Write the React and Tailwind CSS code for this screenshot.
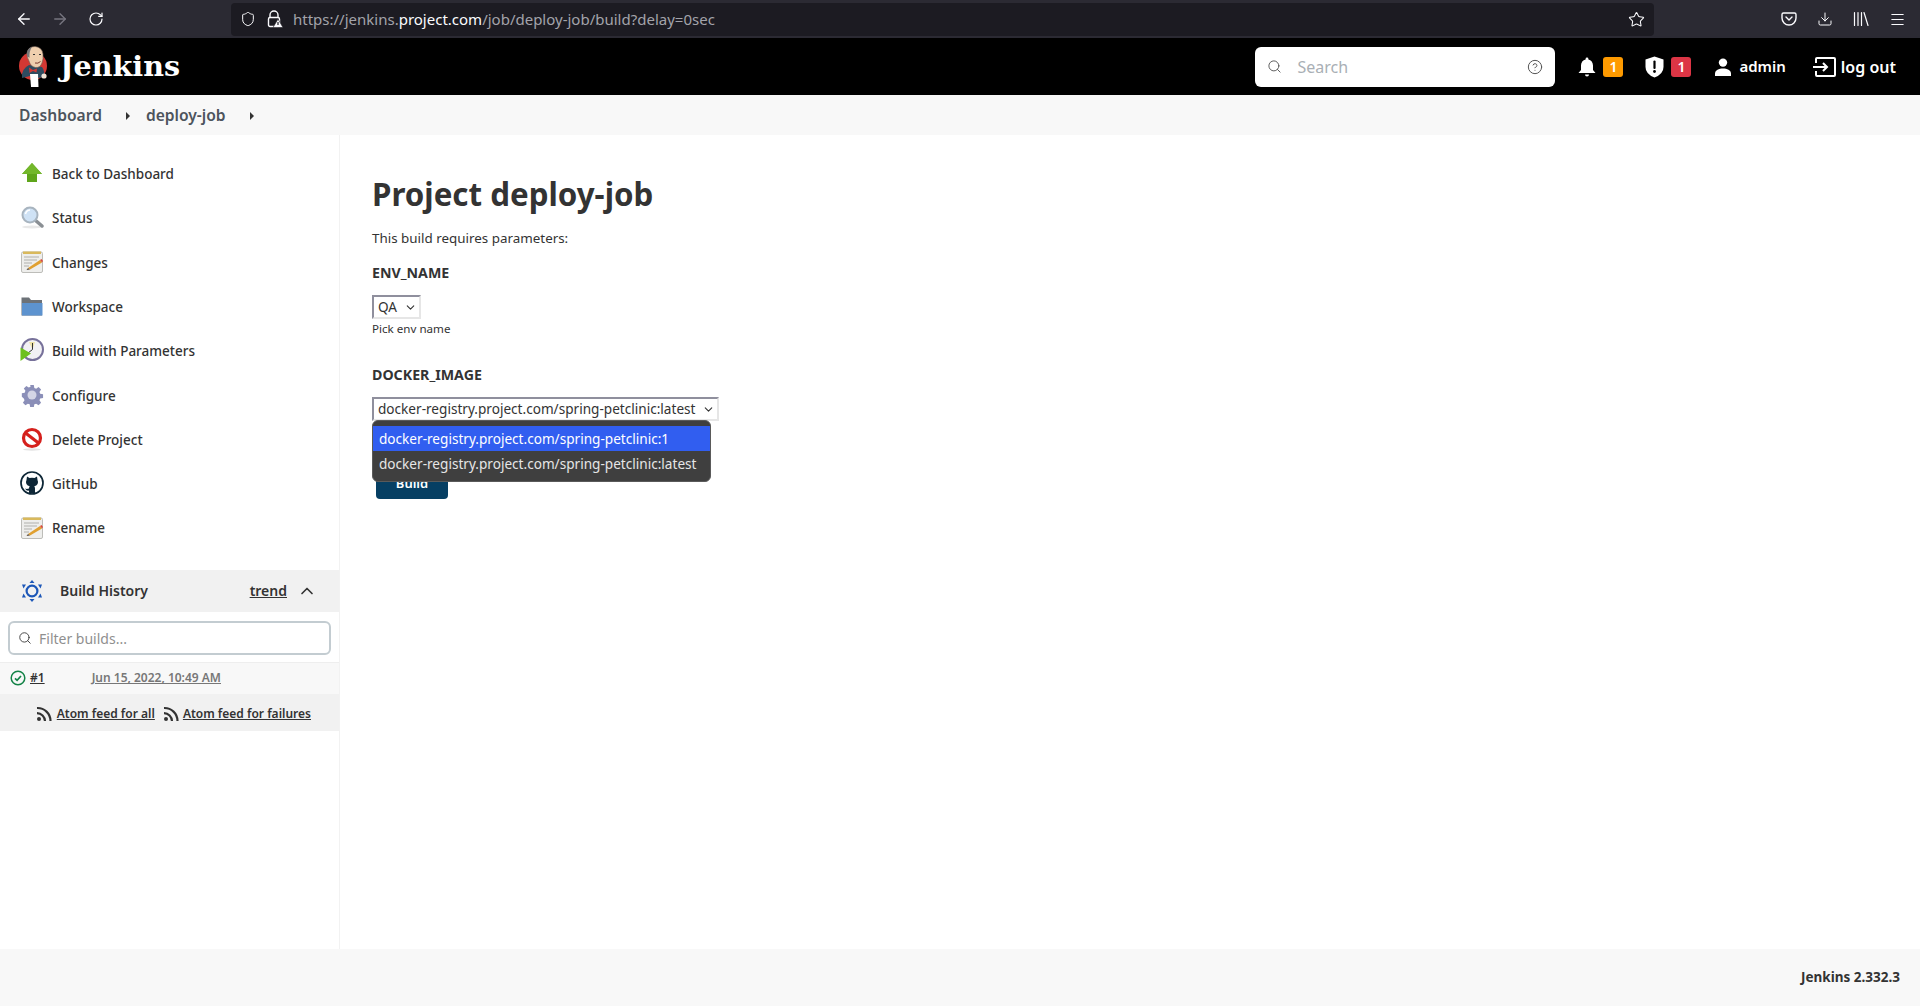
import { ArrowLeft, ArrowRight, RotateCw, Shield, Star, Download, Menu, Search, CircleHelp, ChevronDown, ChevronUp } from "lucide-react"

const UpIcon = () => (
  <svg width="24" height="24" viewBox="0 0 24 24">
    <path d="M12 2 L22 13 L17 13 L17 21 L7 21 L7 13 L2 13 Z" fill="#5fa51b" />
    <path d="M12 2 L22 13 L2 13 Z" fill="#73b72b" />
  </svg>
)

const StatusIcon = () => (
  <svg width="24" height="24" viewBox="0 0 24 24">
    <ellipse cx="12" cy="22" rx="10" ry="1.5" fill="#e8e8e8" />
    <path d="M15 15 L22 21" stroke="#8a8f94" strokeWidth="3.5" strokeLinecap="round" />
    <circle cx="10" cy="10" r="7.5" fill="#cfe2f5" stroke="#a8b4bf" strokeWidth="2" />
    <path d="M5.5 9 A5 5 0 0 1 10 5" stroke="#fff" strokeWidth="1.5" fill="none" />
  </svg>
)

const NotepadIcon = () => (
  <svg width="24" height="24" viewBox="0 0 24 24">
    <rect x="1.5" y="2" width="21" height="20.5" rx="1.5" fill="#eeeeec" stroke="#bdbdb9" />
    <rect x="3" y="1.5" width="18" height="2.5" fill="#d9b95c" />
    <path d="M4 7H19M4 10H17M4 13H12M4 16H9" stroke="#b0b0ac" strokeWidth="1" />
    <path d="M8 18 L20 10 L22 12.5 L10 19.5 Z" fill="#e0a030" />
    <path d="M20 10 L22 12.5 L23 11 L21.5 9 Z" fill="#d94a3a" />
    <path d="M8 18 L10 19.5 L6.5 20 Z" fill="#5a4a3a" />
  </svg>
)

const FolderIcon = () => (
  <svg width="24" height="24" viewBox="0 0 24 24">
    <path d="M1.5 3.5 H9 L11 6 H22 V21.5 H1.5 Z" fill="#6d7278" />
    <path d="M4 9 H22.5 V21.5 H2 V9 Z" fill="#5d93cf" />
  </svg>
)

const BuildIcon = () => (
  <svg width="24" height="24" viewBox="0 0 24 24">
    <circle cx="12.5" cy="11.5" r="10.5" fill="#f2f1f4" stroke="#77719a" strokeWidth="2" />
    <path d="M12.5 11.5 L9 4 L15 4 Z" fill="#efe3a8" />
    <path d="M12.5 5 V11.5 L8 15" stroke="#333" strokeWidth="1" fill="none" />
    <path d="M0.5 9.5 L11 15.5 L0.5 23 Z" fill="#6cc01c" />
  </svg>
)

const GearIcon = () => (
  <svg width="24" height="24" viewBox="0 0 24 24">
    <path
      d="M10 1h4l.6 3.2 2 .8 2.7-1.8 2.8 2.8-1.8 2.7.8 2 3.2.6v4l-3.2.6-.8 2 1.8 2.7-2.8 2.8-2.7-1.8-2 .8-.6 3.2h-4l-.6-3.2-2-.8-2.7 1.8-2.8-2.8 1.8-2.7-.8-2L.7 14v-4l3.2-.6.8-2-1.8-2.7 2.8-2.8 2.7 1.8 2-.8z"
      fill="#8b8fb8"
      transform="translate(1.2 1.2) scale(0.9)"
    />
    <circle cx="12" cy="12" r="4.5" fill="#d5d6e6" />
  </svg>
)

const DeleteIcon = () => (
  <svg width="24" height="24" viewBox="0 0 24 24">
    <ellipse cx="12" cy="22.5" rx="9" ry="1.2" fill="#e4e4e4" />
    <circle cx="12" cy="11" r="8.5" fill="#fff" stroke="#d5201c" strokeWidth="3.2" />
    <path d="M5.5 6 L18.5 16" stroke="#d5201c" strokeWidth="3.2" />
  </svg>
)

const GithubIcon = () => (
  <svg width="24" height="24" viewBox="0 0 24 24">
    <circle cx="12" cy="12" r="11" fill="#fff" stroke="#0d2636" strokeWidth="1.7" />
    <path
      d="M7 5.5 L9.5 7 Q12 6.4 14.5 7 L17 5.5 L17.5 9 Q18.5 11 17.6 13 Q16.5 15 14.3 15.2 Q15 16 15 17.5 V22.5 H9 V19.6 Q6.5 20.2 5 17.5 Q6.5 18.4 9 17.6 Q9 16 9.7 15.2 Q7.5 15 6.4 13 Q5.5 11 6.5 9 Z"
      fill="#0d2636"
    />
  </svg>
)

const HistoryIcon = () => (
  <svg width="24" height="24" viewBox="0 0 24 24" fill="#1c57b8">
    <circle cx="12" cy="12" r="5.4" fill="none" stroke="#1c57b8" strokeWidth="2.2" />
    <path d="M12 1 L14.5 4 H9.5 Z" />
    <path d="M12 23 L14.5 20 H9.5 Z" />
    <path d="M2 5.5 H6 L3.5 9.5 Z" />
    <path d="M22 5.5 H18 L20.5 9.5 Z" />
    <path d="M2 18.5 H6 L3.5 14.5 Z" />
    <path d="M22 18.5 H18 L20.5 14.5 Z" />
  </svg>
)

const RssIcon = () => (
  <svg width="16" height="16" viewBox="0 0 16 16" fill="none" stroke="#333" strokeWidth="2.2">
    <circle cx="3" cy="13" r="2" fill="#333" stroke="none" />
    <path d="M1 7.2 A8 8 0 0 1 9 15" />
    <path d="M1 2 A13 13 0 0 1 14.5 15" />
  </svg>
)

const JenkinsLogo = () => (
  <svg width="31" height="41" viewBox="0 0 31 41">
    <circle cx="15" cy="20" r="14" fill="#d33833" />
    <path d="M4 32 Q3 23 11 19 L24 21 Q27 25 26 31 L20 32 L12 30 Z" fill="#2f4c60" />
    <path d="M9 7 Q10 0.5 17 0.5 Q24 1 25 8 Q25.5 13 24 17 Q22 22 17.5 21.5 Q12.5 20.5 11 15 Q9 12 9 7 Z" fill="#efcfae" stroke="#6b5b52" strokeWidth="0.6" />
    <path d="M9 10 Q8 3 14 1 Q11 5 11.5 12 Z" fill="#77777a" />
    <path d="M15 8.5h2M21 8.5h2" stroke="#333" strokeWidth="1" />
    <path d="M17 17 Q20 18 22.5 15.5" stroke="#7a3b2e" strokeWidth="1" fill="none" />
    <path d="M11 21.5 L15 24 L19 22.5 L18.5 26.5 L15 25 L11.5 27 Z" fill="#d33833" />
    <path d="M12 28 L20 28 L20.5 41 L13 41 Z" fill="#fff" />
    <circle cx="26" cy="30" r="2.6" fill="#efe3d4" />
  </svg>
)

const PocketIcon = () => (
  <svg width="16" height="16" viewBox="0 0 16 16" fill="none" stroke="#fbfbfe" strokeWidth="1.4" strokeLinecap="round" strokeLinejoin="round">
    <path d="M2.5 2h11A1.5 1.5 0 0 1 15 3.5V7a7 7 0 0 1-14 0V3.5A1.5 1.5 0 0 1 2.5 2z" />
    <path d="M5 6l3 3 3-3" />
  </svg>
)

const LibraryIcon = () => (
  <svg width="16" height="16" viewBox="0 0 16 16" fill="none" stroke="#fbfbfe" strokeWidth="1.2" strokeLinecap="round">
    <path d="M1.5 1.5V14.5M5 1.5V14.5M8.5 1.5V14.5M11 1.5L15 14.5" />
  </svg>
)

const InsecureLock = () => (
  <svg width="16" height="18" viewBox="0 0 16 18">
    <path d="M3 8V5a4 4 0 0 1 8 0v3" fill="none" stroke="#fbfbfe" strokeWidth="1.4" />
    <rect x="1.5" y="7.5" width="11" height="9" rx="1.5" fill="none" stroke="#fbfbfe" strokeWidth="1.4" />
    <path d="M11 9 L16 17.5 H6 Z" fill="#fbfbfe" stroke="#1c1b22" strokeWidth="0.6" />
    <path d="M11 12V15" stroke="#1c1b22" strokeWidth="1.2" />
  </svg>
)

const BellIcon = () => (
  <svg width="18" height="20" viewBox="0 0 18 20" fill="#fff">
    <path d="M9 0.5a1.4 1.4 0 0 1 1.4 1.4v.5C13.2 3 15 5.4 15 8.5V13l2.5 3H.5L3 13V8.5c0-3.1 1.8-5.5 4.6-6.1v-.5A1.4 1.4 0 0 1 9 .5z" />
    <path d="M7 17.5h4a2 2 0 0 1-4 0z" />
  </svg>
)

const AlertShield = () => (
  <svg width="19" height="22" viewBox="0 0 19 22">
    <path d="M9.5 0.5 L18.5 3.5 V11 Q18.5 18 9.5 21.5 Q0.5 18 0.5 11 V3.5 Z" fill="#fff" />
    <path d="M9.5 5.5 V12" stroke="#000" strokeWidth="2.2" strokeLinecap="round" />
    <circle cx="9.5" cy="15.5" r="1.4" fill="#000" />
  </svg>
)

const UserIcon = () => (
  <svg width="18" height="18" viewBox="0 0 18 18" fill="#fff">
    <circle cx="9" cy="4.6" r="4.2" />
    <path d="M1 18v-2.5C1 12 5 10.4 9 10.4s8 1.6 8 5.1V18z" />
  </svg>
)

const LogoutIcon = () => (
  <svg width="23" height="20" viewBox="0 0 23 20" fill="none" stroke="#fff" strokeWidth="2">
    <path d="M3 6V2a1 1 0 0 1 1-1h17a1 1 0 0 1 1 1v16a1 1 0 0 1-1 1H4a1 1 0 0 1-1-1v-4" />
    <path d="M0 10H14M10 6l4 4-4 4" />
  </svg>
)

const CheckCircle = () => (
  <svg width="16" height="16" viewBox="0 0 16 16" fill="none" stroke="#138347" strokeWidth="1.5">
    <circle cx="8" cy="8" r="6.8" />
    <path d="M5 8.3l2.1 2L11 6" strokeWidth="1.7" />
  </svg>
)

const navItems = [
  { label: "Back to Dashboard", icon: UpIcon },
  { label: "Status", icon: StatusIcon },
  { label: "Changes", icon: NotepadIcon },
  { label: "Workspace", icon: FolderIcon },
  { label: "Build with Parameters", icon: BuildIcon },
  { label: "Configure", icon: GearIcon },
  { label: "Delete Project", icon: DeleteIcon },
  { label: "GitHub", icon: GithubIcon },
  { label: "Rename", icon: NotepadIcon },
]

function Crumb({ children }) {
  return (
    <>
      <span className="text-[15.6px] font-semibold text-[#4d545d]">{children}</span>
      <span className="ml-[24px] mr-[16px] h-0 w-0 border-y-[4px] border-l-[4px] border-y-transparent border-l-[#333]"></span>
    </>
  )
}

function SelectBox({ value, width }) {
  return (
    <div
      className={`flex h-[24px] items-center justify-between whitespace-nowrap border-2 border-t-[#8f8f9d] border-l-[#8f8f9d] border-r-[#e6e6e6] border-b-[#e6e6e6] pl-[4px] pr-[2px] text-[13.6px] text-[#333] ${width}`}
    >
      <span>{value}</span>
      <ChevronDown size={13} strokeWidth={2} color="#333" />
    </div>
  )
}

export default function App() {
  return (
    <div className="flex min-h-[1006px] flex-col bg-white font-['Noto_Sans',sans-serif] text-[#333]">
      <div className="flex h-[38px] items-center bg-[#2b2a33] pl-[15px] pr-[14px]">
        <ArrowLeft size={18} color="#fbfbfe" strokeWidth={1.8} />
        <ArrowRight size={18} color="#777680" strokeWidth={1.8} className="ml-[18px]" />
        <RotateCw size={16} color="#fbfbfe" strokeWidth={1.8} className="ml-[19px]" />
        <div className="ml-[127px] flex h-[33px] w-[1423px] items-center rounded bg-[#1c1b22] pl-[9px] pr-[9px]">
          <Shield size={16} color="#fbfbfe" strokeWidth={1.5} />
          <span className="ml-[11px]"><InsecureLock /></span>
          <span className="ml-[10px] text-[15px] text-[#a3a3aa]">
            https://jenkins.<span className="text-[#fbfbfe]">project.com</span>/job/deploy-job/build?delay=0sec
          </span>
          <Star size={17} color="#fbfbfe" strokeWidth={1.5} className="ml-auto" />
        </div>
        <div className="ml-auto flex items-center gap-[20px]">
          <PocketIcon />
          <Download size={16} color="#fbfbfe" strokeWidth={1.5} />
          <LibraryIcon />
          <Menu size={17} color="#fbfbfe" strokeWidth={1.6} />
        </div>
      </div>

      <header className="flex h-[57px] items-center bg-black pl-[18px] pr-[24px] text-white">
        <JenkinsLogo />
        <span className="ml-[11px] font-['DejaVu_Serif',serif] text-[28.6px] font-bold">Jenkins</span>
        <div className="ml-auto flex h-[40px] w-[300px] items-center rounded-md bg-white pl-[12px] pr-[12px]">
          <Search size={15} color="#555" strokeWidth={1.5} />
          <span className="ml-[15px] text-[16px] text-[#a9afb5]">Search</span>
          <CircleHelp size={16} color="#555" strokeWidth={1.5} className="ml-auto" />
        </div>
        <div className="ml-[23px] flex items-center text-[16px] font-semibold">
          <BellIcon />
          <span className="ml-[7px] flex h-[20px] w-[20px] items-center justify-center rounded-[3px] bg-[#fe9a00] text-[14px]">1</span>
          <span className="ml-[22px]"><AlertShield /></span>
          <span className="ml-[7px] flex h-[20px] w-[20px] items-center justify-center rounded-[3px] bg-[#dc3545] text-[14px]">1</span>
          <span className="ml-[23px]"><UserIcon /></span>
          <span className="ml-[7px] text-[15px]">admin</span>
          <span className="ml-[27px]"><LogoutIcon /></span>
          <span className="ml-[5px]">log out</span>
        </div>
      </header>

      <nav className="flex h-[40px] items-center bg-[#f8f8f8] pl-[19px] pt-[2px]">
        <Crumb>Dashboard</Crumb>
        <Crumb>deploy-job</Crumb>
      </nav>

      <div className="flex flex-1">
        <aside className="w-[340px] border-r border-[#f2f2f2] pt-[17px]">
          <ul className="flex flex-col">
            {navItems.map((item) => (
              <li key={item.label} className="flex h-[44.3px] items-center gap-[8px] pl-[20px] text-[13.5px] font-medium">
                <span className="-mt-[2px]"><item.icon /></span>
                <span>{item.label}</span>
              </li>
            ))}
          </ul>

          <div className="mt-[19px] flex h-[42px] items-center bg-[#f1f1f1] pl-[20px] pr-[22px]">
            <HistoryIcon />
            <span className="ml-[16px] text-[14px] font-semibold">Build History</span>
            <span className="ml-auto text-[14px] font-semibold underline">trend</span>
            <ChevronUp size={20} strokeWidth={2} className="ml-[10px]" />
          </div>
          <div className="h-[50px] px-[8px] pt-[9px]">
            <div className="flex h-[34px] items-center rounded-md border-2 border-[#c3ccd1] pl-[8px]">
              <Search size={14} color="#333" strokeWidth={1.5} />
              <span className="ml-[7px] pt-[2px] text-[14px] text-[#8f8f8f]">Filter builds...</span>
            </div>
          </div>
          <div className="flex h-[32px] items-center border-t border-[#eee] bg-[#f8f8f8] pl-[10px] text-[12px] font-semibold">
            <CheckCircle />
            <span className="ml-[4px] underline">#1</span>
            <span className="ml-[47px] text-[#777] underline">Jun 15, 2022, 10:49 AM</span>
          </div>
          <div className="flex h-[37px] items-center justify-end bg-[#f1f1f1] pr-[28px] pt-[3px] text-[12px] font-semibold">
            <RssIcon />
            <span className="ml-[5px] underline">Atom feed for all</span>
            <span className="ml-[8px]"><RssIcon /></span>
            <span className="ml-[4px] underline">Atom feed for failures</span>
          </div>
        </aside>

        <main className="relative flex-1 pl-[32px] pt-[38px]">
          <h1 className="text-[31.3px] font-bold leading-[43px]">Project deploy-job</h1>
          <p className="mt-[12px] text-[13.4px] leading-[20px]">This build requires parameters:</p>
          <div className="mt-[15px] text-[14.2px] font-bold leading-[20px]">ENV_NAME</div>
          <div className="mt-[12px]"><SelectBox value="QA" width="w-[49px]" /></div>
          <div className="mt-[1px] text-[11.6px] leading-[17px]">Pick env name</div>
          <div className="mt-[28px] text-[14.2px] font-bold leading-[20px]">DOCKER_IMAGE</div>
          <div className="mt-[12px]">
            <SelectBox value="docker-registry.project.com/spring-petclinic:latest" width="w-[347px]" />
          </div>
          <button className="ml-[4px] mt-[46px] h-[32px] w-[72px] rounded bg-[#063f63] pt-[2px] text-[13px] font-semibold text-white">
            Build
          </button>

          <div className="absolute left-[32px] top-[285px] w-[339px] rounded-md border border-[#5a5a5a] bg-[#3f3f3f] py-[5px] text-[13.6px] leading-[25px] text-[#e6e6e6]">
            <div className="bg-[#315ef0] pl-[6px] text-white">docker-registry.project.com/spring-petclinic:1</div>
            <div className="pl-[6px]">docker-registry.project.com/spring-petclinic:latest</div>
          </div>
        </main>
      </div>

      <footer className="flex h-[57px] items-center justify-end bg-[#f8f8f8] pr-[20px] text-[13.5px] font-bold">
        Jenkins 2.332.3
      </footer>
    </div>
  )
}
